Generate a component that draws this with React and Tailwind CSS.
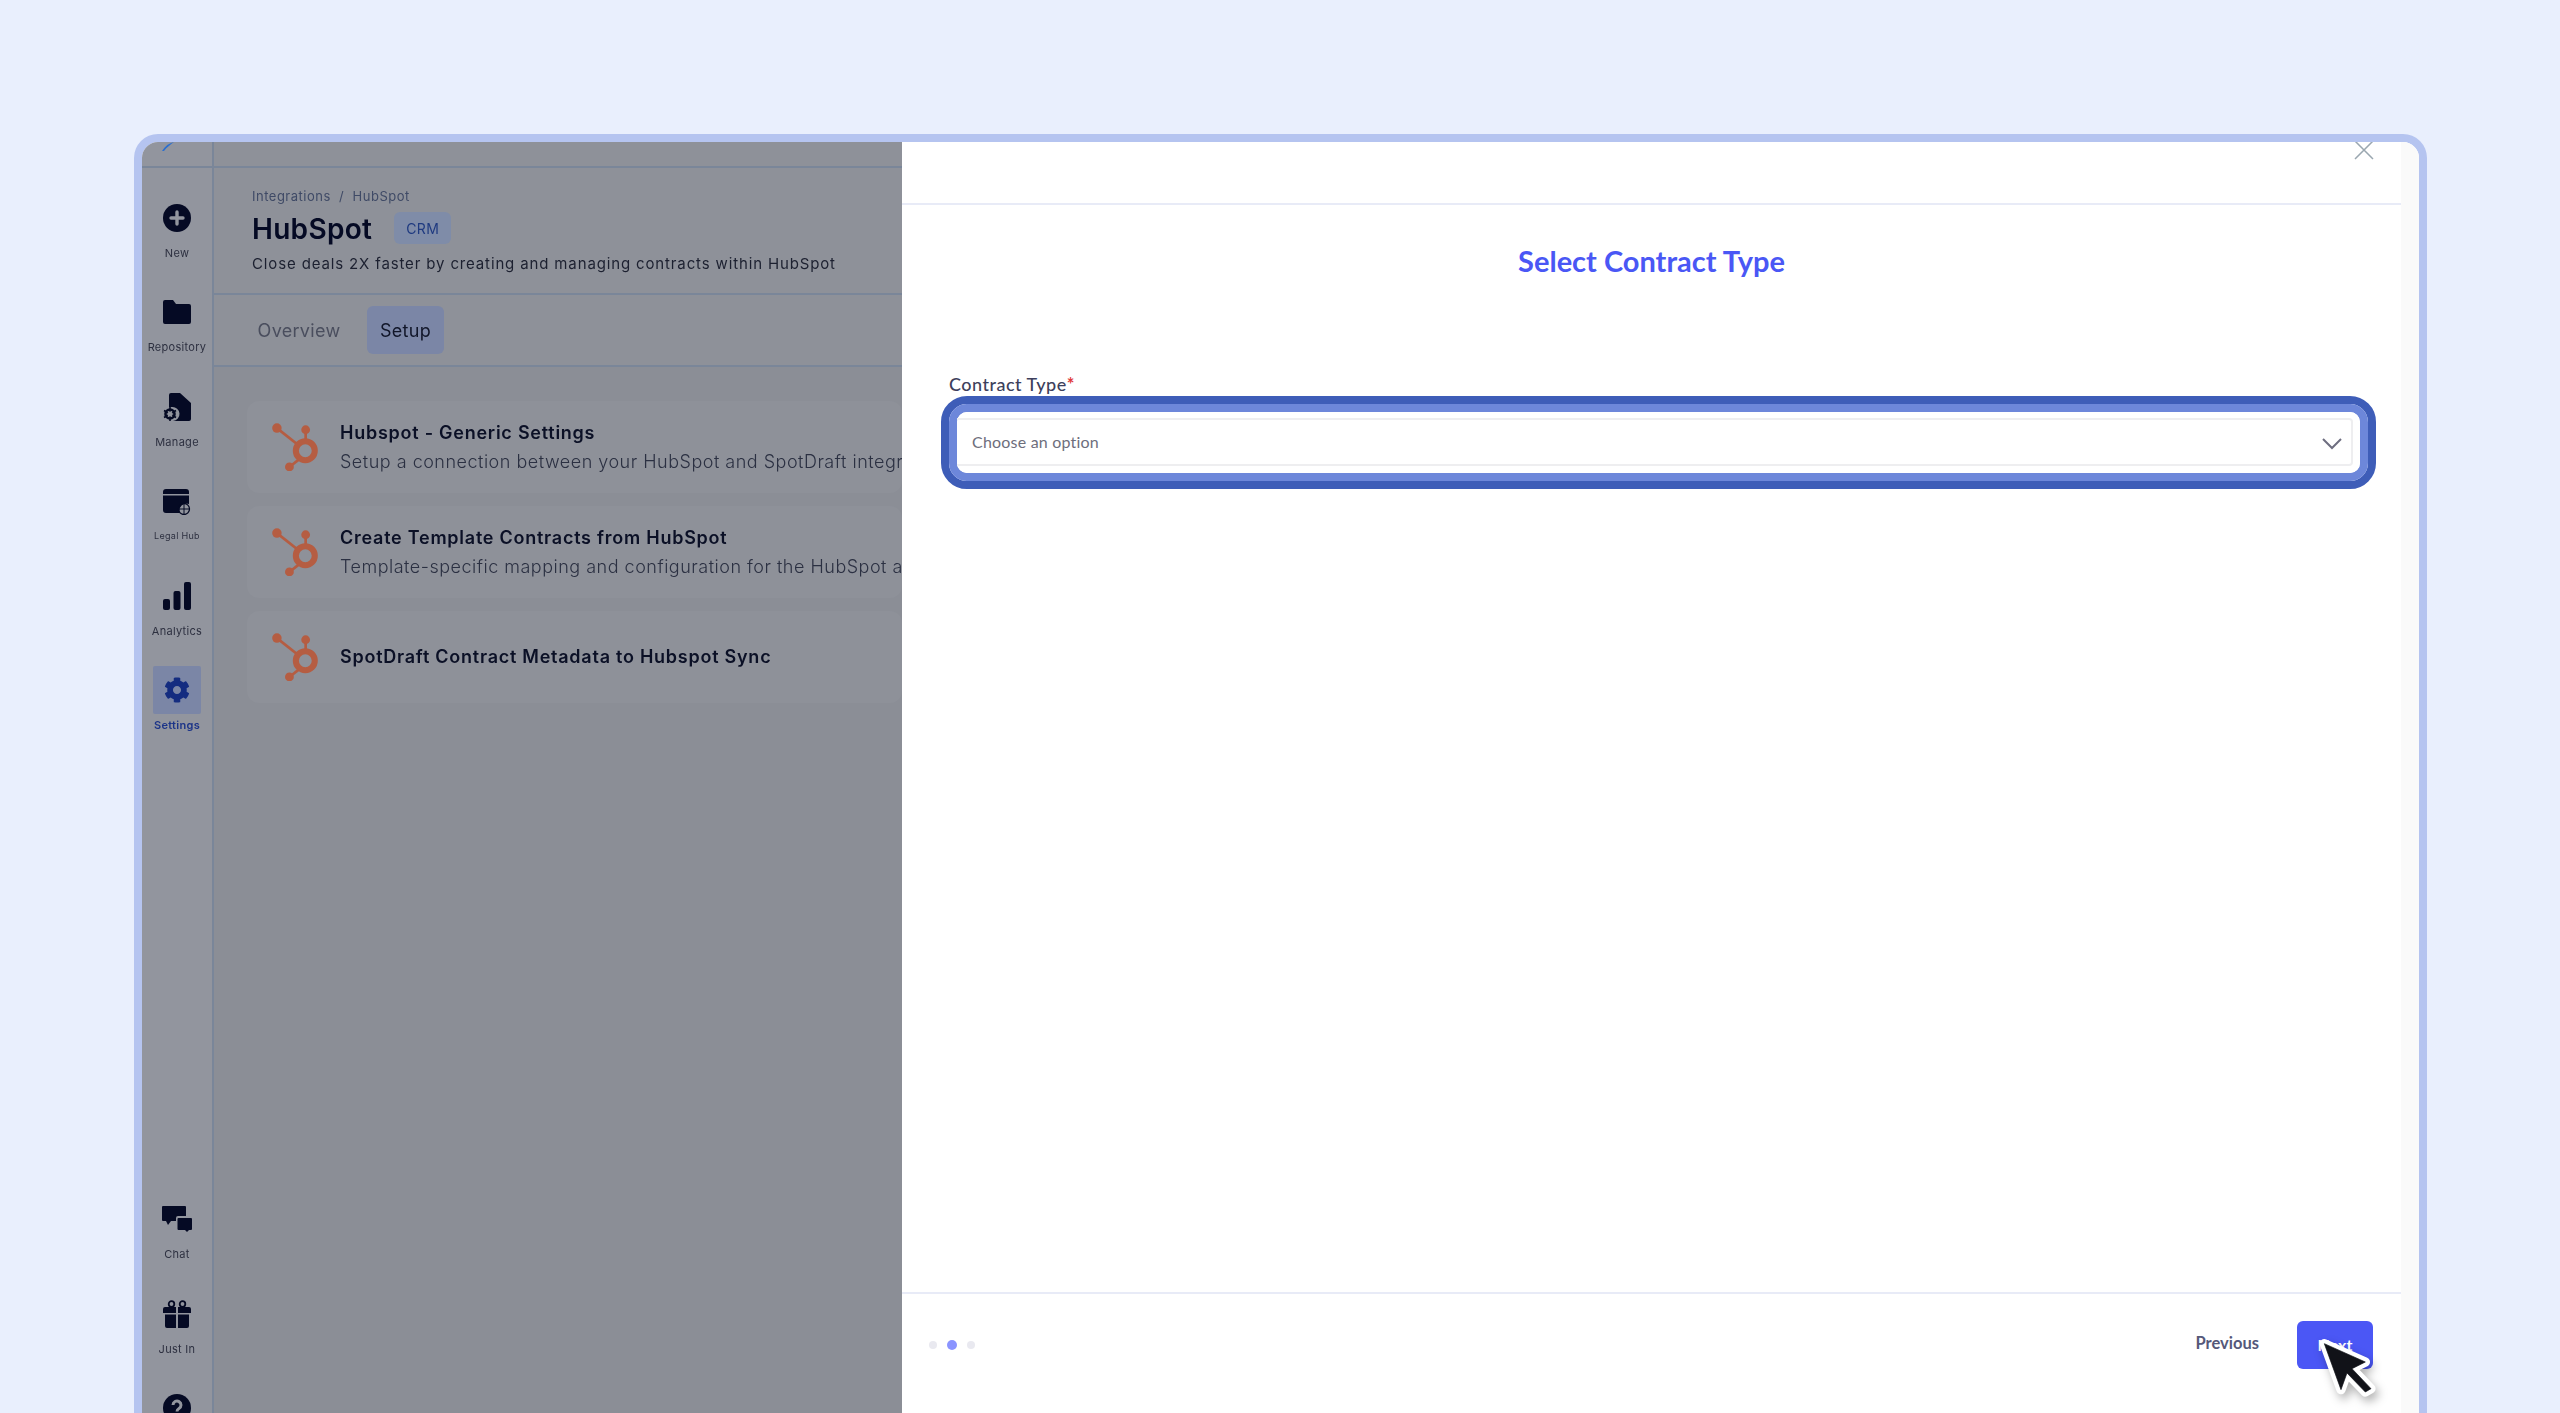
import React from "react";
import { FaCog } from "react-icons/fa";

const ink = "#050a24";

const Hub = () => (
  <svg viewBox="0 0 135 142" className="w-[46px] h-[48px] shrink-0" fill="none">
    <g stroke="#b55d42" strokeWidth="8">
      <path d="M14 15 L78 66" />
      <path d="M99 20 V60" />
      <path d="M51 130 L84 104" />
      <circle cx="98" cy="82" r="28" strokeWidth="18" />
    </g>
    <g fill="#b55d42">
      <circle cx="14" cy="15" r="14" />
      <circle cx="99" cy="20" r="13" />
      <circle cx="51" cy="130" r="13" />
    </g>
  </svg>
);

const IconNew = () => (
  <svg viewBox="0 0 28 28" className="w-7 h-7">
    <circle cx="14" cy="14" r="14" fill={ink} />
    <path d="M14 8v12M8 14h12" stroke="#92959e" strokeWidth="3.4" strokeLinecap="round" />
  </svg>
);
const IconFolder = () => (
  <svg viewBox="0 0 28 24" className="w-7 h-6">
    <path d="M2 0h8l3 4h13a2 2 0 0 1 2 2v16a2 2 0 0 1-2 2H2a2 2 0 0 1-2-2V2a2 2 0 0 1 2-2z" fill={ink} />
  </svg>
);
const IconManage = () => (
  <svg viewBox="0 0 28 28" className="w-7 h-7">
    <path d="M6 2a2 2 0 0 1 2-2h9l11 10v16a2 2 0 0 1-2 2H10a6 6 0 0 0-1-14H6z" fill={ink} />
    <circle cx="7" cy="21" r="4.5" fill="none" stroke={ink} strokeWidth="2.6" />
    <path d="M7 14v14M1 17.5l12 7M1 24.5l12-7" stroke={ink} strokeWidth="1.6" />
    <circle cx="7" cy="21" r="2.5" fill="#92959e" />
  </svg>
);
const IconHub = () => (
  <svg viewBox="0 0 28 28" className="w-7 h-7">
    <path d="M3 2h20a3 3 0 0 1 3 3v2H0V5a3 3 0 0 1 3-3z" fill={ink} />
    <path d="M0 8.500h26V17a7 7 0 0 0-9 9H3a3 3 0 0 1-3-3z" fill={ink} />
    <circle cx="21" cy="22" r="5.500" fill="none" stroke={ink} strokeWidth="1.300" />
    <path d="M15.500 22h11M21 16.500v11" stroke={ink} strokeWidth="1" />
  </svg>
);
const IconBars = () => (
  <svg viewBox="0 0 28 28" className="w-7 h-7" fill={ink}>
    <rect x="0" y="17" width="7" height="11" rx="2" />
    <rect x="10.500" y="9" width="7" height="19" rx="2" />
    <rect x="21" y="0" width="7" height="28" rx="2" />
  </svg>
);
const IconChat = () => (
  <svg viewBox="0 0 30 26" className="w-[30px] h-[26px]" fill={ink}>
    <path d="M1 0h22a1 1 0 0 1 1 1v9h-8a2 2 0 0 0-2 2v3H9l-3 4-2-4H1a1 1 0 0 1-1-1V1a1 1 0 0 1 1-1z" />
    <path d="M16.500 12H29a1 1 0 0 1 1 1v10a1 1 0 0 1-1 1h-2l-2 2-2-2h-6.500a1 1 0 0 1-1-1V13a1 1 0 0 1 1-1z" />
  </svg>
);
const IconGift = () => (
  <svg viewBox="0 0 28 28" className="w-7 h-7" fill={ink}>
    <path d="M2 7h11v6H0V9a2 2 0 0 1 2-2zM15 7h11a2 2 0 0 1 2 2v4H15zM2 14.500h11V28H4a2 2 0 0 1-2-2zM15 14.500h11V26a2 2 0 0 1-2 2h-9z" />
    <circle cx="8.500" cy="4" r="2.800" fill="none" stroke={ink} strokeWidth="1.800" />
    <circle cx="19.500" cy="4" r="2.800" fill="none" stroke={ink} strokeWidth="1.800" />
  </svg>
);
const IconHelp = () => (
  <svg viewBox="0 0 28 28" className="w-7 h-7">
    <circle cx="14" cy="14" r="14" fill={ink} />
    <path d="M10 11a4 4 0 1 1 6 3.500c-1.300.8-2 1.500-2 3" fill="none" stroke="#92959e" strokeWidth="3" />
    <circle cx="14" cy="22" r="1.800" fill="#92959e" />
  </svg>
);

const NavItem = ({ icon, label, small, active }) => (
  <div className="h-[94.4px] shrink-0 flex flex-col items-center">
    <div className={`w-[48px] h-[48px] flex items-center justify-center rounded-[2px] ${active ? "bg-[#7b86a6]" : ""}`}>{icon}</div>
    {label && (
      <div className={`h-[22px] leading-[22px] whitespace-nowrap tracking-[0.3px] ${small ? "text-[9px] text-[#2d3040]" : "text-[11px] text-[#2d3040]"} ${active ? "!text-[#1c3488] font-semibold" : ""}`}>{label}</div>
    )}
  </div>
);

const Card = ({ title, sub }) => (
  <div className="h-[92px] bg-[#8e9199] rounded-[12px] flex items-center pl-[25px] gap-[22px] whitespace-nowrap">
    <Hub />
    <div>
      <div className="text-[18px] leading-[24px] font-semibold tracking-[0.75px] text-[#0b1026]">{title}</div>
      {sub && <div className="text-[18px] leading-[24px] mt-[5px] tracking-[0.5px] text-[#2b3042] font-light">{sub}</div>}
    </div>
  </div>
);

export default function App() {
  return (
    <div className="relative h-[1413px] overflow-hidden bg-[#e9effd] pt-[134px] pl-[134px]">
      <div className="w-[2293px] h-[1279px] border-8 border-b-0 border-[#b5c4f0] rounded-t-[24px] overflow-hidden flex bg-white" style={{ fontFamily: "Inter, sans-serif" }}>
        {/* Sidebar */}
        <aside className="w-[72px] shrink-0 bg-[#92959e] border-r-2 border-[#7a8699] flex flex-col overflow-hidden blur-[0.5px]">
          <div className="h-[26px] shrink-0 border-b-2 border-[#7a8699] pl-[20px]">
            <svg viewBox="0 0 12 9" className="w-[12px] h-[9px]"><path d="M12 0 C7 1 3 4 0 9 L2 9 C5 5 8 3 12 0z" fill="#2a6fd0" /></svg>
          </div>
          <div className="pt-[26px]">
            <NavItem icon={<IconNew />} label="New" />
            <NavItem icon={<IconFolder />} label="Repository" />
            <NavItem icon={<IconManage />} label="Manage" />
            <NavItem icon={<IconHub />} label="Legal Hub" small />
            <NavItem icon={<IconBars />} label="Analytics" />
            <NavItem icon={<FaCog className="w-[26px] h-[26px] text-[#142c80]" />} label="Settings" active />
          </div>
          <div className="mt-[435px]">
            <NavItem icon={<IconChat />} label="Chat" />
            <NavItem icon={<IconGift />} label="Just In" />
            <NavItem icon={<IconHelp />} />
          </div>
        </aside>

        {/* Page behind the modal */}
        <main className="w-[688px] shrink-0 bg-[#8b8e96] overflow-hidden flex flex-col blur-[0.5px]">
          <div className="h-[26px] shrink-0 bg-[#8e9199] border-b-2 border-[#7a8699]" />
          <div className="h-[127px] shrink-0 bg-[#8e9199] border-b-2 border-[#7a8699] pl-[38px] pt-[18px] whitespace-nowrap">
            <div className="text-[13px] leading-[20px] tracking-[0.5px] text-[#3f4a66]">Integrations&nbsp; /&nbsp; HubSpot</div>
            <div className="flex items-center gap-[22px] mt-[3px] h-[40px]">
              <span className="text-[28px] leading-[40px] font-semibold tracking-[0.3px] text-[#050a24]">HubSpot</span>
              <span className="w-[57px] h-[32px] -mt-[2px] rounded-[6px] bg-[#7f8ca8] text-[#1f3a80] text-[14px] tracking-[0.3px] flex items-center justify-center">CRM</span>
            </div>
            <div className="text-[15px] leading-[22px] mt-[4px] tracking-[0.86px] text-[#1c2030]">Close deals 2X faster by creating and managing contracts within HubSpot</div>
          </div>
          <div className="h-[72px] shrink-0 bg-[#8e9199] border-b-2 border-[#7a8699] pl-[38px] flex items-center gap-[21px]">
            <span className="w-[94px] text-center text-[18px] tracking-[0.3px] text-[#4a4e5e]">Overview</span>
            <span className="w-[77px] h-[48px] rounded-[6px] bg-[#7b86a6] text-[18px] tracking-[0.3px] text-[#111629] flex items-center justify-center">Setup</span>
          </div>
          <div className="pl-[33px] pt-[34px] flex flex-col gap-[13px]">
            <Card title="Hubspot - Generic Settings" sub="Setup a connection between your HubSpot and SpotDraft integration" />
            <Card title="Create Template Contracts from HubSpot" sub="Template-specific mapping and configuration for the HubSpot app" />
            <Card title="SpotDraft Contract Metadata to Hubspot Sync" />
          </div>
        </main>

        {/* Modal */}
        <section className="flex-1 min-w-0 flex flex-col bg-white" style={{ fontFamily: "Lato, sans-serif" }}>
          <div className="h-[63px] shrink-0 border-b-2 border-[#e8ebf7] flex justify-end pr-[27px]">
            <svg viewBox="0 0 20 20" className="w-[20px] h-[20px] -mt-[2px]" fill="none" stroke="#9aa7b0" strokeWidth="1.500"><path d="M1 1l18 18M19 1L1 19" /></svg>
          </div>
          <div className="flex-1 min-h-0 flex flex-col">
            <h1 className="text-center text-[29px] leading-[36px] font-bold text-[#4a57f5] mt-[38px]">Select Contract Type</h1>
            <div className="mt-[93px] pl-[47px] text-[18px] leading-[24px] font-medium tracking-[0.5px] text-[#3d3f5c]">
              Contract Type<span className="text-[#e03a3a] font-bold">*</span>
            </div>
            <div className="ml-[39px] w-[1435px] h-[93px] border-8 border-[#3e5db8] rounded-[26px]">
              <div className="h-full border-8 border-[#6d87da] rounded-[18px]">
                <div className="h-full bg-white rounded-[10px] pt-[6px] pb-[7px] pr-[7px]">
                  <div className="h-[48px] border-y-2 border-r-2 border-[#eeeef0] rounded-r-[4px] flex items-center justify-between pl-[15px] pr-[9px]">
                    <span className="text-[16px] tracking-[0.2px] text-[#6d6e7c]">Choose an option</span>
                    <svg viewBox="0 0 20 12" className="w-[20px] h-[12px] mt-[4px]" fill="none" stroke="#6e6e80" strokeWidth="2"><path d="M1 1l9 9 9-9" /></svg>
                  </div>
                </div>
              </div>
            </div>
          </div>
          <div className="h-[121px] shrink-0 border-t-2 border-[#e8ebf7] flex items-start justify-between pr-[28px] pl-[27px]">
            <div className="flex items-center gap-[10px] mt-[46px]">
              <span className="w-[8px] h-[8px] rounded-full bg-[#e9e9f0]" />
              <span className="w-[10px] h-[10px] rounded-full bg-[#8a94ff]" />
              <span className="w-[8px] h-[8px] rounded-full bg-[#e9e9f0]" />
            </div>
            <div className="flex items-start gap-[38px] mt-[27px]">
              <span className="text-[16.5px] leading-[44px] font-bold text-[#55587a]">Previous</span>
              <span className="w-[76px] h-[48px] rounded-[6px] bg-[#4b57f5] text-white text-[16px] font-bold flex items-center justify-center">Next</span>
            </div>
          </div>
        </section>
        <div className="w-[18px] shrink-0 bg-[#fafafa]" />
      </div>

      {/* Mouse pointer on top of the Next button */}
      <svg viewBox="560 200 260 240" className="absolute left-[2306.670px] top-[1326.670px] w-[86.670px] h-[80px] drop-shadow-[3px_5px_5px_rgba(0,0,0,0.3)]">
        <path d="M612 250 L735 305 L695 325 L752 385 L735 395 L680 338 L662 388 Z" fill="#111218" stroke="#fff" strokeWidth="28" strokeLinejoin="round" />
        <path d="M612 250 L735 305 L695 325 L752 385 L735 395 L680 338 L662 388 Z" fill="#111218" stroke="#111218" strokeWidth="2" strokeLinejoin="round" />
      </svg>
    </div>
  );
}
